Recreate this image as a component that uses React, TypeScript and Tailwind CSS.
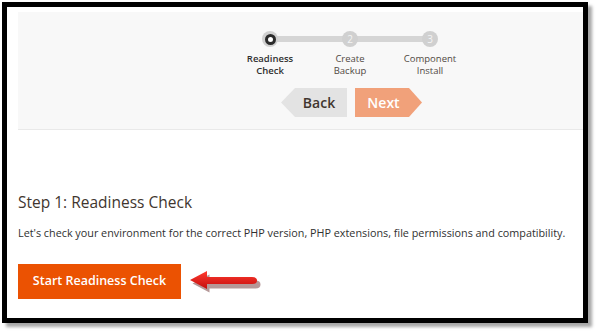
import React from "react";

const font = { fontFamily: '"Open Sans", "Liberation Sans", sans-serif' };

const steps = [
  { n: "1", top: "Readiness", bottom: "Check", active: true },
  { n: "2", top: "Create", bottom: "Backup", active: false },
  { n: "3", top: "Component", bottom: "Install", active: false },
];

const Stepper = () => (
  <div className="relative flex w-[240px]">
    {/* track line between the dots */}
    <div className="absolute left-[40px] top-[5px] h-[6px] w-[160px] bg-[#d5d5d5]" />
    {steps.map((s) => (
      <div key={s.n} className="relative flex w-[80px] flex-col items-center">
        <div className="flex h-[16px] w-[16px] items-center justify-center rounded-full bg-[#d0d0d0]">
          {s.active ? (
            <div className="h-[11px] w-[11px] rounded-full border-[3px] border-[#2b2b2b] bg-white" />
          ) : (
            <span className="text-[10px] leading-none text-[#f4f4f4]">{s.n}</span>
          )}
        </div>
        <div
          className={
            "mt-[6px] text-center text-[9.5px] leading-[12px] " +
            (s.active ? "font-semibold text-[#303030]" : "text-[#514943]")
          }
        >
          <div>{s.top}</div>
          <div>{s.bottom}</div>
        </div>
      </div>
    ))}
  </div>
);

const RedArrow = () => (
  <svg width="76" height="28" viewBox="0 0 76 28" className="ml-[7px]">
    <defs>
      <linearGradient id="ra" x1="0" y1="0" x2="0" y2="1">
        <stop offset="0" stopColor="#ff3b2f" />
        <stop offset="1" stopColor="#c40d0d" />
      </linearGradient>
    </defs>
    <path
      d="M3 13 L20 4 L20 10 L66 10 Q71 10 71 14 Q71 18 66 18 L20 18 L20 22 Z"
      fill="#5a1a1a"
      opacity="0.45"
      transform="translate(1.5 2.5)"
    />
    <path
      d="M2 12 L19 3 L19 9 L64 9 Q69 9 69 12.5 Q69 16 64 16 L19 16 L19 21 Z"
      fill="url(#ra)"
    />
  </svg>
);

export default function App() {
  return (
    <div className="h-[332px] w-[597px] bg-white pl-[2px] pt-[2px]" style={font}>
      <div className="h-[321px] w-[586px] border-[5px] border-black bg-white pl-[11px] pt-[5px] shadow-[4px_4px_3px_rgba(0,0,0,0.35)]">
        {/* wizard header */}
        <div className="h-[118px] border-b border-[#e9e9e9] bg-[#f8f8f8] pl-[212px] pt-[19px]">
          <Stepper />
          <div className="mt-[11px] flex pl-[51px]">
            <button className="flex h-[29px] w-[66px] items-center justify-center bg-[#e3e3e3] pl-[10px] text-[14px] font-semibold text-[#41362f] [clip-path:polygon(14px_0,100%_0,100%_100%,14px_100%,0_50%)]">
              Back
            </button>
            <button className="ml-[8px] flex h-[29px] w-[67px] items-center justify-center bg-[#f1a17a] pr-[10px] text-[14px] font-semibold text-white [clip-path:polygon(0_0,54px_0,67px_50%,54px_100%,0_100%)]">
              Next
            </button>
          </div>
        </div>

        {/* step body */}
        <h2 className="mt-[62px] text-[15.5px] leading-[20px] text-[#41362f]">
          Step 1: Readiness Check
        </h2>
        <p className="mt-[14px] text-[10.8px] leading-[14px] text-[#303030]">
          Let's check your environment for the correct PHP version, PHP extensions, file permissions and compatibility.
        </p>
        <div className="mt-[24px] flex items-center">
          <button className="h-[35px] w-[163px] bg-[#eb5202] text-[12.5px] font-semibold text-white">
            Start Readiness Check
          </button>
          <RedArrow />
        </div>
      </div>
    </div>
  );
}
